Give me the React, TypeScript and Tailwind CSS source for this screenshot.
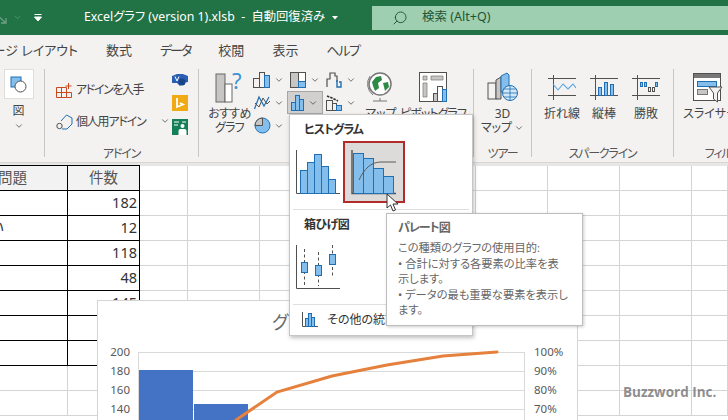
import type { ReactNode } from "react";
import { ChevronDown, Search } from "lucide-react";

const Blue = "#83beec";
const Line = "#1f6fb2";
const Dark = "#505050";

const Icon = ({ w, h, children, className }: { w: number; h: number; children: ReactNode; className?: string }) => (
  <svg width={w} height={h} viewBox={`0 0 ${w} ${h}`} fill="none" className={`shrink-0 ${className ?? ""}`}>
    {children}
  </svg>
);

const Chev = ({ className = "" }: { className?: string }) => (
  <ChevronDown size={10} strokeWidth={2} className={`text-[#555] shrink-0 ${className}`} />
);

// one small chart button in the 3x3 grid of the ribbon
const ChartBtn = ({ children, active }: { children?: ReactNode; active?: boolean }) => (
  <div className={`flex items-center justify-center gap-[3px] pr-[1px] ${active ? "bg-[#d2d0ce] border border-[#a6a6a6]" : ""}`}>
    {children}
    {children && <Chev />}
  </div>
);

const Group = ({ label, width, children }: { label: string; width: number; children: ReactNode }) => (
  <div className="flex flex-col h-full shrink-0" style={{ width }}>
    <div className="flex-1 flex min-h-0">{children}</div>
    <div className="h-[20px] text-center text-[12px] leading-[23px] tracking-[-1.2px] text-[#555] whitespace-nowrap">{label}</div>
  </div>
);

const Sep = () => <div className="w-px h-[88px] mt-[3px] bg-[#c8c6c4] shrink-0" />;

const Cols = [68, 72, 48, 72, 72, 72, 72, 72, 72, 72, 36];
const Rows = [
  ["問題", "件数"],
  ["", "182"],
  ["い", "12"],
  ["", "118"],
  ["", "48"],
  ["", "145"],
  ["", ""],
  ["", ""],
  ["", ""],
  ["", ""],
];

const Sheet = () => (
  <div className="grid grid-cols-[68px_72px_48px_72px_72px_72px_72px_72px_72px_72px_36px] auto-rows-[25px]">
    {Rows.map((row, r) =>
      Cols.map((_, c) => {
        const inTable = r < 8 && c < 2;
        const head = r === 0 && c < 2;
        return (
          <div
            key={`${r}-${c}`}
            className={`border-b border-r overflow-hidden flex items-center text-[14.5px] text-[#333] ${
              inTable ? "border-black" : "border-[#d4d4d4]"
            } ${head ? "border-t -mt-px h-[26px] bg-[#f2f2f2] text-[#555]" : ""} ${
              c === 1 ? (head ? "justify-center" : "justify-end pr-[2px]") : "justify-start"
            }`}
          >
            {c === 0 && row[0] ? <span className={r === 0 ? "-ml-[2px]" : "-ml-[10px]"}>{row[0]}</span> : c === 1 ? row[1] : ""}
          </div>
        );
      })
    )}
  </div>
);

const Chart = () => (
  <div className="absolute left-[97px] top-[300px] w-[481px] h-[130px] bg-white border border-[#d4d4d4]">
    <div className="pl-[174px] text-[18px] text-[#6a6a6a] pt-[9px] leading-[24px] whitespace-nowrap">グラフ タイトル</div>
    <svg width="479" height="120" viewBox="98 301 479 120" className="absolute left-0 top-0">
      <g stroke="#d9d9d9">
        <path d="M138.5 352.5H524.5M138.5 371.5H524.5M138.5 390.5H524.5M138.5 409.5H524.5M138.5 352V421M524.5 352V421" />
      </g>
      <rect x="139" y="370" width="54" height="51" fill="#4472c4" />
      <rect x="194" y="404" width="54" height="17" fill="#4472c4" />
      <polyline
        points="236,420 277,392 332,376 387,365 443,356 497,352"
        fill="none"
        stroke="#e5813c"
        strokeWidth="3"
        strokeLinecap="round"
      />
      <g fontSize="11.5" fill="#595959" textAnchor="end">
        <text x="130" y="356">200</text>
        <text x="130" y="375">180</text>
        <text x="130" y="394">160</text>
        <text x="130" y="413">140</text>
      </g>
      <g fontSize="11.5" fill="#595959">
        <text x="534" y="356">100%</text>
        <text x="534" y="375">90%</text>
        <text x="534" y="394">80%</text>
        <text x="534" y="413">70%</text>
      </g>
    </svg>
  </div>
);

const Dropdown = () => (
  <div className="absolute left-[289px] top-[114px] w-[184px] h-[222px] bg-white border border-[#c8c6c4] shadow-[1px_2px_4px_rgba(0,0,0,0.25)]">
    <div className="pl-[14px] pt-[6px] h-[26px] text-[12px] leading-[18px] tracking-[-1px] font-bold text-[#333]">ヒストグラム</div>
    <div className="flex items-start pl-[6px] h-[68px]">
      <Icon w={45} h={45} className="mt-[9px]">
        <path d="M0.5 0V43.5H44" stroke={Dark} />
        <g fill={Blue} stroke={Line}>
          <rect x="4.5" y="20.5" width="7" height="23" />
          <rect x="11.5" y="12.5" width="7" height="31" />
          <rect x="18.5" y="4.5" width="7" height="39" />
          <rect x="25.5" y="16.5" width="7" height="27" />
          <rect x="32.5" y="29.5" width="7" height="14" />
        </g>
      </Icon>
      <div className="w-[62px] h-[62px] ml-[2px] border-2 border-[#b22a2a] bg-[#dcdbda] shrink-0">
        <Icon w={58} h={58}>
          <path d="M7 7V50.5H51" stroke={Dark} strokeWidth="1.4" />
          <g fill={Blue} stroke={Line}>
            <rect x="8.5" y="10.5" width="10" height="40" />
            <rect x="18.5" y="15.5" width="10" height="35" />
            <rect x="28.5" y="25.5" width="10" height="25" />
            <rect x="38.5" y="33.5" width="10" height="17" />
          </g>
          <path d="M14 37C19 26 26 19 36 19H51" stroke="#5b5b5b" />
        </Icon>
      </div>
    </div>
    <div className="mx-[3px] h-px bg-[#e1dfdd]" />
    <div className="pl-[14px] pt-[6px] h-[26px] text-[12px] leading-[18px] tracking-[-0.5px] font-bold text-[#333]">箱ひげ図</div>
    <div className="pl-[6px] pt-[9px] h-[68px]">
      <Icon w={45} h={45}>
        <path d="M0.5 0V43.5H44" stroke={Dark} />
        <path d="M8.5 4V40M22.5 7V41M36.5 0V33" stroke={Dark} strokeDasharray="3 2.5" />
        <g fill={Blue} stroke={Line}>
          <rect x="5.5" y="17.5" width="6" height="10" />
          <rect x="19.5" y="20.5" width="6" height="10" />
          <rect x="33.5" y="9.5" width="6" height="10" />
        </g>
      </Icon>
    </div>
    <div className="mx-[3px] h-px bg-[#e1dfdd]" />
    <div className="flex items-center gap-[9px] pl-[12px] pt-[7px]">
      <Icon w={16} h={15}>
        <path d="M0.5 0V14.5H16" stroke={Dark} />
        <g fill={Blue} stroke={Line}>
          <rect x="3.5" y="6.5" width="3" height="8" />
          <rect x="6.5" y="1.5" width="3" height="13" />
          <rect x="9.5" y="5.5" width="3" height="9" />
        </g>
      </Icon>
      <span className="text-[12px] leading-[15px] text-[#333] whitespace-nowrap">その他の統計グラフ</span>
    </div>
  </div>
);

const Tooltip = () => (
  <div className="absolute left-[386px] top-[213px] w-[197px] h-[113px] bg-white border border-[#bdbdbd] shadow-[1px_1px_3px_rgba(0,0,0,0.2)] pl-[11px] pt-[5px] text-[#666] whitespace-nowrap">
    <div className="text-[12px] font-bold leading-[18px] tracking-[-1px] mb-[3px]">パレート図</div>
    <div className="text-[11.25px] leading-[15.5px]">
      この種類のグラフの使用目的:
      <br />• 合計に対する各要素の比率を表
      <br />
      示します。
      <br />• データの最も重要な要素を表示し
      <br />
      ます。
    </div>
  </div>
);

export default function App() {
  return (
    <div className="relative w-[728px] h-[420px] overflow-hidden bg-white font-['Noto_Sans','Noto_Sans_CJK_JP',sans-serif] [font-feature-settings:'palt'] text-[#444]">
      {/* title bar */}
      <div className="h-[35px] bg-[#217346] flex items-center text-white overflow-hidden">
        <Icon w={8} h={16}>
          <path d="M-4 4L6 13M6 8V13H1" stroke="#6f9f85" strokeWidth="1.3" />
        </Icon>
        <ChevronDown size={9} className="ml-[5px] text-[#5f9b7b] shrink-0" />
        <Icon w={10} h={10} className="ml-[11px]">
          <path d="M1.5 1.5H8.5M1.5 4L5 8L8.5 4Z" stroke="#fff" fill="#fff" strokeWidth="1" />
        </Icon>
        <span className="ml-[41px] text-[12.3px] whitespace-nowrap w-[246px] shrink-0">Excelグラフ (version 1).xlsb&nbsp; -&nbsp; 自動回復済み</span>
        <Icon w={8} h={6} className="ml-[1px]">
          <path d="M1 1H7L4 4.5Z" fill="#fff" />
        </Icon>
        <div className="ml-[33px] h-[24px] flex-1 bg-[#9fcfb1] flex items-center pl-[20px] text-[#1e5535]">
          <Search size={16} strokeWidth={1.4} className="-scale-x-100 shrink-0" />
          <span className="ml-[14px] text-[12.5px]">検索 (Alt+Q)</span>
        </div>
      </div>

      {/* tabs */}
      <div className="h-[31px] bg-[#f3f2f1] flex items-center gap-[28px] text-[13px] text-[#444] whitespace-nowrap overflow-hidden">
        <span className="w-[78px] shrink-0 flex justify-end">ページ レイアウト</span>
        <span>数式</span>
        <span className="tracking-[-2px]">データ</span>
        <span>校閲</span>
        <span>表示</span>
        <span className="tracking-[-1.3px]">ヘルプ</span>
      </div>

      {/* ribbon */}
      <div className="h-[97px] bg-[#f3f2f1] flex overflow-hidden text-[12px] text-[#444] border-b border-[#d8d6d4] whitespace-nowrap">
        <Group label="" width={44}>
          <div className="flex flex-col items-center w-full pr-[7px] pt-[3px]">
            <div className="w-[30px] h-[30px] bg-white border border-[#e1dfdd] flex items-center justify-center">
              <Icon w={17} h={17}>
                <rect x="1" y="1" width="10" height="10" fill={Blue} stroke={Line} />
                <circle cx="10.5" cy="10.5" r="5.5" fill="#fff" stroke={Dark} />
              </Icon>
            </div>
            <span className="mt-[4px] leading-[16px]">図</span>
            <Chev className="mt-[2px]" />
          </div>
        </Group>
        <Sep />
        <Group label="アドイン" width={153}>
          <div className="flex flex-1">
            <div className="flex flex-col pl-[11px] pt-[14px] gap-[12px] w-[127px]">
              <div className="flex items-center gap-[4px] h-[20px]">
                <Icon w={16} h={15}>
                  <path d="M0.5 4.5H10.5V14.5H0.5ZM0.5 9.5H15.5V14.5H10.5M5.5 4.5V14.5M12.5 0V6M9.5 3H15.5" stroke="#c8491f" />
                </Icon>
                <span className="tracking-[-1.4px]">アドインを入手</span>
              </div>
              <div className="flex items-center gap-[3px] h-[20px]">
                <Icon w={17} h={16}>
                  <path d="M5 7L10.5 1L16 4V10L11 15H6" stroke={Line} />
                  <circle cx="3.5" cy="12" r="2.7" stroke={Dark} />
                </Icon>
                <span className="w-[72px] tracking-[-1.2px]">個人用アドイン</span>
                <Chev className="ml-[9px] -mt-[3px]" />
              </div>
            </div>
            <div className="flex flex-col gap-[8px] pt-[5px]">
              <Icon w={16} h={16}>
                <path d="M0 5L5 3H11L16 5V11L11 12L8 15L5 12H0Z" fill="#2b5fb3" />
                <path d="M3 5.5L5 10L7 5.5" stroke="#fff" />
                <circle cx="10" cy="11" r="3.5" fill="#1c4587" />
              </Icon>
              <Icon w={16} h={16}>
                <rect width="16" height="16" fill="#f0ab14" />
                <path d="M5 3V12L11 9.5L8 8" stroke="#fff" strokeWidth="1.8" />
              </Icon>
              <Icon w={16} h={16}>
                <rect width="16" height="16" fill="#14805a" />
                <path d="M2 3H7M2 6H6M10 3H14" stroke="#fff" />
                <circle cx="10.5" cy="7" r="2" fill="#fff" />
                <path d="M6.5 16V12Q6.5 10 8.5 10H12.5Q14.5 10 14.5 12V16Z" fill="#fff" />
              </Icon>
            </div>
          </div>
        </Group>
        <Sep />
        <Group label="" width={274}>
          <div className="flex w-full">
            <div className="ml-[9px] w-[43px] shrink-0 flex flex-col items-center pt-[5px]">
              <Icon w={30} h={32} className="ml-[1px]">
                <rect x="1" y="3" width="9" height="28" fill="#c8c6c4" stroke="#666" />
                <rect x="10" y="13" width="7" height="18" fill="#fff" stroke="#666" />
                <text x="17" y="18" fontSize="22" fill="#3f94d4">?</text>
              </Icon>
              <span className="leading-[14px] mt-[4px] tracking-[-0.7px]">おすすめ</span>
              <span className="leading-[14px] tracking-[-0.7px]">グラフ</span>
            </div>
            <div className="grid grid-cols-[36px_36px_36px] grid-rows-[23px_23px_23px] pt-[2px] h-[71px] shrink-0">
              <ChartBtn>
                <Icon w={18} h={16}>
                  <rect x="0.5" y="6.5" width="6" height="9" stroke={Dark} />
                  <rect x="6.5" y="0.5" width="5" height="15" stroke={Dark} />
                  <rect x="11.5" y="3.5" width="5" height="12" fill={Blue} stroke={Line} />
                </Icon>
              </ChartBtn>
              <ChartBtn>
                <Icon w={17} h={16}>
                  <rect x="0.5" y="0.5" width="8" height="15" fill="#c8c6c4" stroke={Dark} />
                  <rect x="8.5" y="0.5" width="7" height="9" fill="#fff" stroke={Dark} />
                  <rect x="8.5" y="9.5" width="7" height="6" fill={Blue} stroke={Line} />
                </Icon>
              </ChartBtn>
              <ChartBtn>
                <Icon w={17} h={16}>
                  <path d="M1 15V7H4V1H9V4H11V10" stroke={Dark} fill="none" strokeWidth="1.2" />
                  <path d="M11 8V15H15V10H13" stroke={Line} strokeWidth="1.4" />
                </Icon>
              </ChartBtn>
              <ChartBtn>
                <Icon w={17} h={15}>
                  <path d="M0.5 14L5 2L10 11L15 2" stroke={Line} strokeWidth="1.2" />
                  <path d="M1 8L5 12L9 3L13 9L16 6" stroke={Dark} />
                </Icon>
              </ChartBtn>
              <ChartBtn active>
                <Icon w={14} h={17}>
                  <g fill={Blue} stroke={Line}>
                    <rect x="0.5" y="8.5" width="4" height="8" />
                    <rect x="4.5" y="1.5" width="4" height="15" />
                    <rect x="8.5" y="5.5" width="4" height="11" />
                  </g>
                </Icon>
              </ChartBtn>
              <ChartBtn>
                <Icon w={17} h={16}>
                  <rect x="0.5" y="5.5" width="6" height="10" stroke={Dark} />
                  <rect x="6.5" y="8.5" width="4" height="7" stroke={Dark} />
                  <rect x="10.5" y="10.5" width="5" height="5" fill={Blue} stroke={Line} />
                  <path d="M1 1L6 3L12 6" stroke="#333" strokeWidth="1.6" strokeDasharray="2.5 1" />
                </Icon>
              </ChartBtn>
              <ChartBtn>
                <Icon w={17} h={17}>
                  <circle cx="8.5" cy="8.5" r="7.5" fill={Blue} stroke={Line} />
                  <path d="M8.5 8.5V1A7.5 7.5 0 0 0 1 8.5Z" fill="#c8c6c4" stroke={Dark} />
                </Icon>
              </ChartBtn>
              <ChartBtn />
              <ChartBtn />
            </div>
            <div className="w-[44px] shrink-0 flex flex-col items-center pt-[5px]">
              <Icon w={26} h={31} className="-ml-[3px]">
                <circle cx="13" cy="13" r="11" fill="#fff" stroke="#777" strokeWidth="1.5" />
                <path d="M5 11L9 6L14 5L15 9L11 12L12 17L8 20L6 15ZM16 12L21 11L22 16L18 20Z" fill="#2e8b46" />
                <path d="M13 27V30M6 30H20M3 5A14 14 0 0 0 6 24" stroke="#777" />
              </Icon>
              <span className="leading-[14px] mt-[5px]">マップ</span>
            </div>
            <div className="w-[60px] shrink-0 flex flex-col items-center pt-[6px]">
              <Icon w={28} h={30}>
                <rect x="0.5" y="0.5" width="27" height="29" fill="#fff" stroke={Dark} />
                <path d="M4 4H8V8H4ZM4 11H8V25H4ZM12 4H24V8H12Z" fill="#c8c6c4" stroke="#777" strokeWidth="0.7" />
                <rect x="14.5" y="21.5" width="4" height="8" fill="#c8c6c4" stroke={Dark} />
                <rect x="18.5" y="14.5" width="5" height="15" fill="#fff" stroke={Dark} />
                <rect x="23.5" y="17.5" width="4" height="12" fill={Blue} stroke={Line} />
              </Icon>
              <span className="leading-[14px] mt-[5px] tracking-[-1px]">ピボットグラフ</span>
            </div>
          </div>
        </Group>
        <Sep />
        <Group label="ツアー" width={57}>
          <div className="flex flex-col items-center w-full pt-[6px]">
            <Icon w={32} h={30}>
              <rect x="1" y="11" width="8" height="16" fill="#f3f2f1" stroke={Dark} />
              <path d="M9 8L14 5V27H9Z" fill="#c8c6c4" stroke={Dark} />
              <path d="M14 4L20 1L22 3V20H14Z" fill={Blue} stroke={Line} />
              <circle cx="23" cy="21" r="7.5" fill="#d5e8f8" stroke={Line} />
              <path d="M15.5 21H30.5M23 13.5V28.5M17 17H29M17 25H29" stroke={Line} strokeWidth="0.8" />
            </Icon>
            <span className="leading-[14px] mt-[5px]">3D</span>
            <span className="leading-[14px] flex items-center gap-[2px]">
              マップ
              <Chev />
            </span>
          </div>
        </Group>
        <Sep />
        <Group label="スパークライン" width={141}>
          <div className="flex pl-[9px] pt-[9px] w-full">
            <div className="w-[42px] flex flex-col items-center">
              <Icon w={28} h={25}>
                <path d="M5.5 0V25M0 3.5H28M0 20.5H28" stroke={Dark} />
                <path d="M5 9L10 15L15 9L20 14L25 9L28 13" stroke="#5aa7e0" strokeWidth="1.1" />
              </Icon>
              <span className="leading-[14px] mt-[7px]">折れ線</span>
            </div>
            <div className="w-[42px] flex flex-col items-center">
              <Icon w={28} h={25}>
                <path d="M5.5 0V25M0 3.5H28M0 20.5H28" stroke={Dark} />
                <g fill={Blue} stroke={Line}>
                  <rect x="8.5" y="12.5" width="3" height="8" />
                  <rect x="14.5" y="7.5" width="3" height="13" />
                  <rect x="20.5" y="9.5" width="3" height="11" />
                </g>
              </Icon>
              <span className="leading-[14px] mt-[7px]">縦棒</span>
            </div>
            <div className="w-[42px] flex flex-col items-center">
              <Icon w={28} h={25}>
                <path d="M5.5 0V25M0 3.5H28M0 20.5H28" stroke={Dark} />
                <g fill={Blue} stroke={Line}>
                  <rect x="8.5" y="7.5" width="2" height="4" />
                  <rect x="12.5" y="7.5" width="2" height="4" />
                  <rect x="23.5" y="7.5" width="2" height="4" />
                </g>
                <g stroke={Dark}>
                  <rect x="16.5" y="12.5" width="2" height="4" />
                  <rect x="20.5" y="12.5" width="2" height="4" />
                </g>
              </Icon>
              <span className="leading-[14px] mt-[7px]">勝敗</span>
            </div>
          </div>
        </Group>
        <Sep />
        <Group label="フィルター" width={108}>
          <div className="flex flex-col pl-[9px] pt-[7px] w-full">
            <Icon w={30} h={30} className="ml-[10px]">
              <rect x="0.5" y="0.5" width="27" height="27" fill="#fff" stroke={Dark} />
              <rect x="1" y="1" width="26" height="4" fill="#777" />
              <rect x="4.5" y="8.5" width="19" height="5" fill={Blue} stroke={Line} />
              <rect x="4.5" y="16.5" width="10" height="5" fill="#c8c6c4" stroke="#777" />
              <path d="M16 14H29L24.5 20V29L20.5 26V20Z" fill="#f3f2f1" stroke={Dark} />
            </Icon>
            <span className="leading-[14px] mt-[4px]">スライサー</span>
          </div>
        </Group>
      </div>

      {/* sheet */}
      <div className="h-[3px] bg-[#e6e6e6]" />
      <Sheet />

      <Chart />
      <Dropdown />
      <Tooltip />

      {/* pointer */}
      <svg width="14" height="20" viewBox="0 0 14 20" className="absolute left-[386px] top-[193px]">
        <path d="M1 1V15L4.5 12L7 18L9.5 17L7 11H12Z" fill="#fff" stroke="#333" />
      </svg>

      <div className="absolute left-[623px] top-[382px] text-[13.5px] font-bold text-[#7f7f7f]/90 leading-[20px] whitespace-nowrap font-['Open_Sans',sans-serif]">
        Buzzword Inc.
      </div>
    </div>
  );
}
